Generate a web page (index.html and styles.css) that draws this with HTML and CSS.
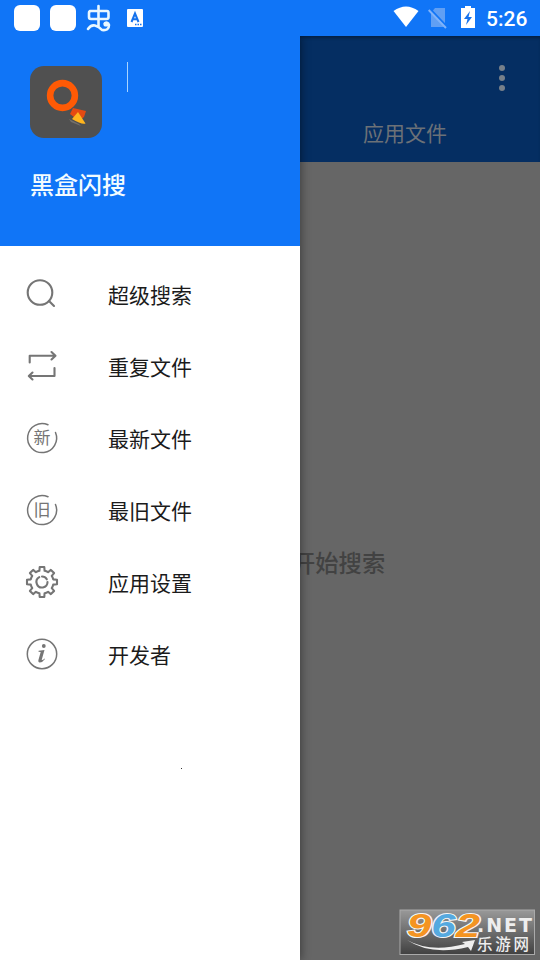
FILE: index.html
```html
<!DOCTYPE html>
<html lang="zh-CN">
<head>
<meta charset="utf-8">
<title>黑盒闪搜</title>
<link rel="stylesheet" href="styles.css">
</head>
<body>
<div class="screen">
  <header class="status">
    <div class="status-left">
      <span class="block"></span>
      <span class="block"></span>
      <svg class="bug" width="26" height="28" viewBox="0 0 26 28" fill="none" stroke="#e9f8ff" stroke-width="2.6" stroke-linecap="round" stroke-linejoin="round"><path d="M12.500 2V22M4 7H21Q22.500 7 22.500 9V13Q22.500 15 20.500 15H5Q3 15 3 13V9Q3 7 5 7M2 25Q5 20.500 9 21.500T16 26Q23 27 23 21Q22 17.500 19 19.500"/><circle cx="20" cy="20" r="1.300"/></svg>
      <svg class="lang" width="16" height="18" viewBox="0 0 16 18"><rect width="16" height="18" rx="1" fill="#fff"/><path d="M4.500 13L8 4.500L11.500 13M5.800 10.300H10.200" fill="none" stroke="#1672ec" stroke-width="2"/><path d="M8 15.500h1.500m1 0h1.500m1 0h1.500" stroke="#1672ec" stroke-width="1.400"/></svg>
    </div>
    <div class="status-right">
      <svg width="26" height="22" viewBox="0 0 26 22"><path d="M0.500 5Q13-4 25.500 5L13 21Z" fill="#fff"/></svg>
      <svg class="nosim" width="20" height="22" viewBox="0 0 20 22"><path d="M7 1H17V20H3V6Z" fill="#609ff4"/><path d="M1.500 2L19 20.500" stroke="#1075f7" stroke-width="3"/><path d="M.7 3L18 21" stroke="#80b3fa" stroke-width="1.900"/></svg>
      <svg class="battery" width="14" height="22" viewBox="0 0 14 22"><path d="M4 0H10V2H14V22H0V2H4Z" fill="#fff"/><path d="M9 5L3 13H6.500L5 19L11 11H7.500Z" fill="#1672ec"/></svg>
      <span class="clock">5:26</span>
    </div>
  </header>

  <div class="content">
    <aside class="drawer">
      <div class="profile">
        <div class="profile-top">
          <svg class="logo" width="72" height="72" viewBox="0 0 72 72"><rect width="72" height="72" rx="14" fill="#505050"/><path d="M39 53L49 58L51 60L41 56Z" fill="#74706b"/><path d="M43 42L56 45L54 51L49 55L40 48Z" fill="#e54a12"/><path d="M48 46L55.500 57.500Q52 59 42 53Z" fill="#ffb51e"/><circle cx="32.500" cy="29.500" r="12.400" fill="none" stroke="#ff5a05" stroke-width="6.600"/></svg>
          <span class="cursor"></span>
        </div>
        <div class="app-name">黑盒闪搜</div>
      </div>
      <nav class="menu">
        <div class="item"><svg class="icon" viewBox="0 0 36 36"><circle cx="16" cy="16.500" r="12.300"/><path d="M25 25L30 30"/></svg><span>超级搜索</span></div>
        <div class="item"><svg class="icon" viewBox="0 0 36 36"><path d="M5.700 14.500V7.700H31M27.500 4L31.500 7.700L27.500 11.500M30.500 20V28H5M8.500 24.500L4.800 28L8.500 31.500"/></svg><span>重复文件</span></div>
        <div class="item"><svg class="icon thin" viewBox="0 0 36 36"><path d="M24 4.800A14.500 14.500 0 1 0 31.500 12.500"/><text x="18" y="24.300" class="glyph">新</text></svg><span>最新文件</span></div>
        <div class="item"><svg class="icon thin" viewBox="0 0 36 36"><path d="M24 4.800A14.500 14.500 0 1 0 31.500 12.500"/><text x="18" y="24.300" class="glyph">旧</text></svg><span>最旧文件</span></div>
        <div class="item"><svg class="icon" viewBox="-18 -18 36 36"><path d="M-2.600-11.200L-2.300-15H2.300L2.600-11.200Q4.400-10.900 6.080-9.760L8.900-12.100L12.100-8.900L9.760-6.080Q10.900-4.400 11.200-2.600L15-2.300V2.300L11.200 2.600Q10.900 4.400 9.760 6.080L12.100 8.900L8.900 12.100L6.080 9.760Q4.400 10.900 2.600 11.200L2.300 15H-2.300L-2.600 11.200Q-4.400 10.900-6.080 9.760L-8.900 12.100L-12.100 8.900L-9.760 6.080Q-10.900 4.400-11.200 2.600L-15 2.300V-2.300L-11.200-2.600Q-10.900-4.400-9.760-6.080L-12.100-8.900L-8.900-12.100L-6.080-9.760Q-4.400-10.900-2.600-11.200Z"/><path d="M0-5.500A5.500 5.500 0 0 1 4.800-2.700M5.500 0A5.500 5.500 0 1 1-2.700-4.800"/></svg><span>应用设置</span></div>
        <div class="item"><svg class="icon thin" viewBox="0 0 36 36"><circle cx="18" cy="18" r="14.700"/><circle cx="19.800" cy="10" r="1.900" class="solid"/><path class="solid" d="M14.600 14.800L20.500 14L17.800 23.500Q17.600 25 20.700 22.500L21 23Q18.500 26.500 15.800 26.500Q13.800 26.200 14.500 23.700L16.700 15.900L14.500 15.700Z"/></svg><span>开发者</span></div>
      </nav>
      <span class="speck"></span>
    </aside>

    <main class="page">
      <div class="toolbar">
        <div class="more"><i></i><i></i><i></i></div>
        <div class="tab">应用文件</div>
      </div>
      <div class="empty"><span>开始搜索</span></div>
      <svg class="badge" width="136" height="46" viewBox="0 0 136 46">
        <defs><linearGradient id="shade" x2="0" y2="1"><stop stop-color="#999"/><stop offset="1" stop-color="#414141"/></linearGradient></defs>
        <rect x="1" y="1" width="134.500" height="44.500" fill="url(#shade)" stroke="#aaa"/>
        <g class="digits"><text x="8" y="28" textLength="73" lengthAdjust="spacingAndGlyphs"><tspan fill="#f49422">9</tspan><tspan fill="#55a9df">6</tspan><tspan fill="#f49422">2</tspan></text></g>
        <text class="net" x="78" y="22.500" textLength="55">.NET</text>
        <text class="site" x="78" y="40.500" textLength="52">乐游网</text>
        <path d="M8 31Q31 44 66 35L63 33L76 31L72 42L69 38Q32 47 8 31Z" fill="#eee"/>
      </svg>
    </main>
  </div>
</div>
</body>
</html>
```
FILE: styles.css
```css
* { box-sizing: border-box; }
body {
  margin: 0;
  font-family: Roboto, "Noto Sans CJK SC", sans-serif;
}
svg { display: block; flex: none; }
.screen {
  width: 540px;
  height: 960px;
  display: flex;
  flex-direction: column;
  overflow: hidden;
  background: #666;
}
.status {
  height: 36px;
  flex: none;
  display: flex;
  justify-content: space-between;
  background: #1075f7;
}
.status-left { display: flex; padding: 5px 0 0 14px; }
.block {
  width: 26px;
  height: 26px;
  margin-right: 10px;
  border-radius: 6px;
  background: #fff;
}
.bug { margin: -1px 0 0 0; }
.lang { margin: 4px 0 0 15px; }
.status-right { display: flex; padding: 6px 12px 0 0; }
.nosim { margin: 1px 0 0 9px; }
.battery { margin-left: 13px; }
.clock {
  width: 42px;
  margin-left: 11px;
  color: #fff;
  font-size: 21px;
  font-weight: 500;
  line-height: 26px;
  white-space: nowrap;
}
.content { flex: 1; display: flex; min-height: 0; }
.drawer {
  width: 300px;
  flex: none;
  position: relative;
  z-index: 1;
  background: #fff;
  box-shadow: 2px 0 8px rgba(0, 0, 0, .35);
  clip-path: inset(0 -16px 0 0);
}
.profile {
  height: 210px;
  padding: 30px 30px 0;
  background: #1075f7;
}
.profile-top { display: flex; }
.cursor {
  width: 1px;
  height: 30px;
  margin: -4px 0 0 25px;
  background: #a9d4ff;
}
.app-name {
  margin-top: 30px;
  color: #f3fcff;
  font-size: 24px;
  font-weight: 500;
  line-height: 36px;
}
.menu { padding-top: 12px; }
.item {
  height: 72px;
  padding-left: 24px;
  display: flex;
  align-items: center;
  gap: 48px;
  color: #1b1b1b;
  font-size: 21px;
  line-height: 32px;
}
.item span { padding-top: 3px; }
.icon {
  width: 36px;
  height: 36px;
  fill: none;
  stroke: #757575;
  stroke-width: 2.1;
  stroke-linecap: round;
  stroke-linejoin: round;
}
.thin { stroke-width: 1.5; }
.icon .glyph {
  fill: #757575;
  stroke: none;
  font-size: 17px;
  text-anchor: middle;
}
.icon .solid { fill: #757575; stroke: none; }
.speck {
  display: block;
  width: 1px;
  height: 1px;
  margin: 78px 0 0 181px;
  background: #333;
}
.page {
  flex: 1;
  display: flex;
  flex-direction: column;
  overflow: hidden;
}
.toolbar {
  height: 126px;
  flex: none;
  background: #052e62;
  box-shadow: inset 0 3px 3px -1px rgba(0, 0, 0, .3);
}
.more {
  display: flex;
  flex-direction: column;
  align-items: flex-end;
  gap: 4px;
  padding: 29px 35px 0 0;
}
.more i {
  width: 6px;
  height: 6px;
  border-radius: 50%;
  background: #77808a;
}
.tab {
  margin: 27px 0 0 63px;
  color: #6c7177;
  font-size: 21px;
  line-height: 32px;
}
.empty {
  flex: 1;
  display: flex;
  align-items: center;
  margin-left: -8px;
  padding-top: 53px;
  color: #424242;
  font-size: 23.3px;
  font-weight: 500;
}
.badge { margin: 0 0 5px 99px; }
.digits text {
  font: italic bold 34px "Liberation Sans", sans-serif;
  stroke: #f5f5f5;
  stroke-width: 2.2;
  paint-order: stroke;
}
.net {
  fill: #eee;
  font: bold 19px "DejaVu Sans", sans-serif;
}
.site {
  fill: #eee;
  font-size: 15.5px;
  font-weight: 500;
}
```
